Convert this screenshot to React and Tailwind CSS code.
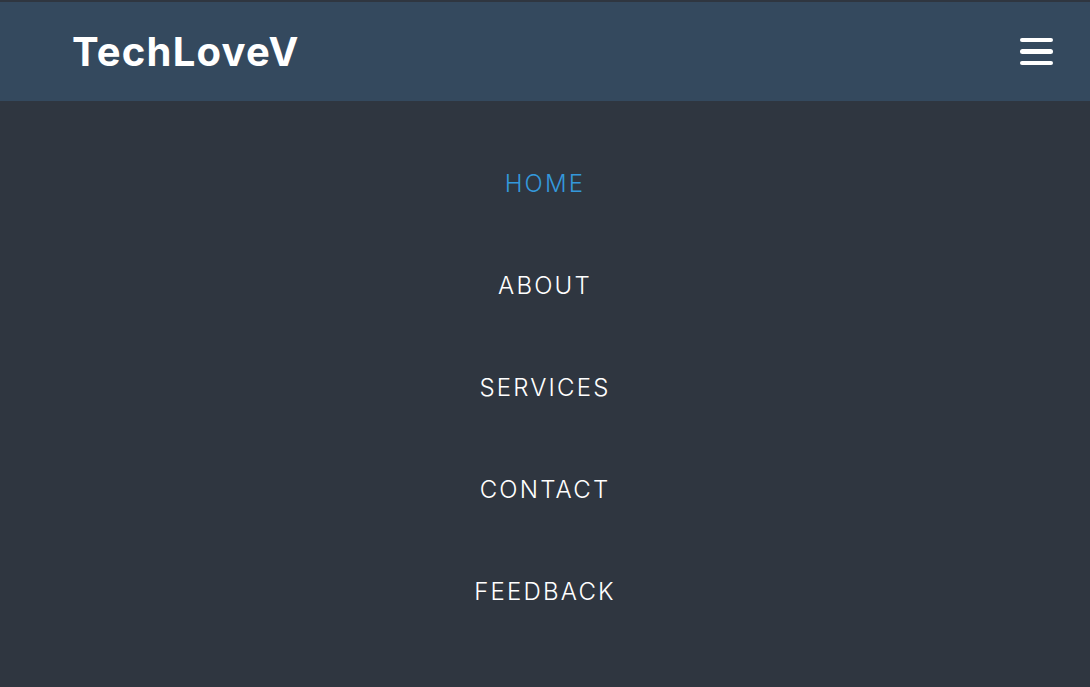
import React, { useState } from 'react';

const links = ['HOME', 'ABOUT', 'SERVICES', 'CONTACT', 'FEEDBACK'];

const App = () => {
  const [active, setActive] = useState('HOME');

  return (
    <div className="min-h-[687px] bg-[#2f3640] pt-[2px] font-['Inter','Liberation_Sans',sans-serif]">
      {/* Top bar */}
      <header className="h-[99px] bg-[#34495e] flex items-center justify-between pl-[72px] pr-[37px]">
        <span className="text-[40px] font-bold text-white tracking-[1.2px] leading-none">TechLoveV</span>
        <button className="flex flex-col gap-[7px] w-[33px]">
          <span className="h-[4.5px] w-full rounded-full bg-white" />
          <span className="h-[4.5px] w-full rounded-full bg-white" />
          <span className="h-[4.5px] w-full rounded-full bg-white" />
        </button>
      </header>

      {/* Menu */}
      <nav className="pt-[32px] flex flex-col items-center">
        {links.map((l) => (
          <a
            key={l}
            href="#"
            onClick={() => setActive(l)}
            className={
              'h-[102px] flex items-center text-[24px] font-light tracking-[2.2px] ' +
              (active === l ? 'text-[#3498db]' : 'text-white')
            }
          >
            {l}
          </a>
        ))}
      </nav>
    </div>
  );
};

export default App;
